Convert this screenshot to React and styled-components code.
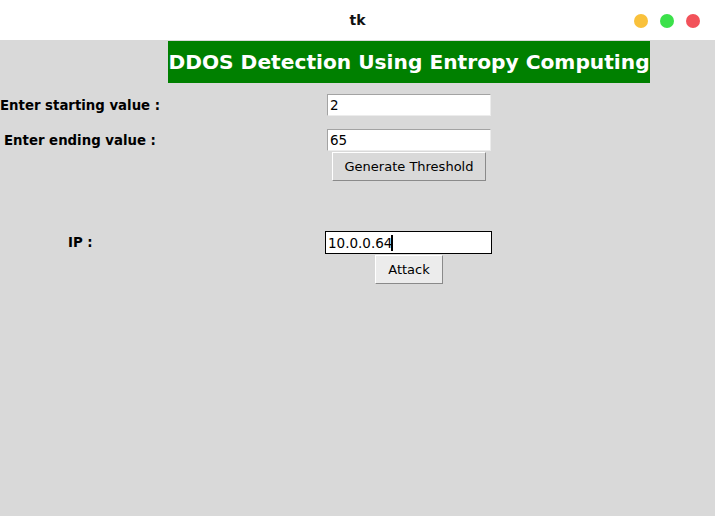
import React, { useState } from 'react';
import styled, { createGlobalStyle } from 'styled-components';

const GlobalStyle = createGlobalStyle`
  html, body {
    margin: 0;
    padding: 0;
    background: #d9d9d9;
    font-family: "DejaVu Sans", sans-serif;
  }
`;

const Window = styled.div`
  width: 715px;
  height: 516px;
  display: flex;
  flex-direction: column;
  background: #d9d9d9;
  overflow: hidden;
`;

const TitleBar = styled.div`
  height: 40px;
  background: #ffffff;
  display: grid;
  grid-template-columns: 1fr auto 1fr;
  align-items: center;
  h1 {
    grid-column: 2;
    margin: 0;
    font-size: 14px;
    font-weight: bold;
    color: #111;
  }
`;

const Dots = styled.div`
  grid-column: 3;
  justify-self: end;
  display: flex;
  gap: 12px;
  padding-right: 15px;
  margin-top: 1px;
`;

const Dot = styled.span`
  width: 14px;
  height: 14px;
  border-radius: 50%;
  background: ${(p) => p.color};
`;

const Banner = styled.div`
  margin: 1px 0 0 168px;
  width: 482px;
  height: 42px;
  background: #008000;
  color: #ffffff;
  font-weight: bold;
  font-size: 20.2px;
  display: flex;
  align-items: center;
  justify-content: center;
  white-space: nowrap;
`;

const Row = styled.div`
  display: grid;
  grid-template-columns: ${(p) => p.$col || 327}px auto;
  align-items: center;
  margin-top: ${(p) => p.$top}px;
`;

const Label = styled.label`
  padding-left: ${(p) => p.$indent || 0}px;
  font-weight: bold;
  font-size: 13.3px;
  color: #000;
  white-space: nowrap;
`;

const Field = styled.div`
  position: relative;
  width: ${(p) => p.$w || 164}px;
`;

const Entry = styled.input`
  box-sizing: border-box;
  width: 100%;
  height: ${(p) => p.$h || 22}px;
  margin: 0;
  padding: 0 2px;
  font-family: "DejaVu Sans", sans-serif;
  font-size: 13.5px;
  color: #000;
  background: #ffffff;
  outline: none;
  border: 1px solid;
  border-color: ${(p) => (p.$focus ? '#000' : '#a3a3a3 #ececec #ececec #a3a3a3')};
  box-shadow: ${(p) => (p.$focus ? 'inset 0 0 0 1px #fff' : 'none')};
  caret-color: transparent;
`;

const Caret = styled.span`
  position: absolute;
  left: ${(p) => p.$x}px;
  top: 4px;
  width: 2px;
  height: 16px;
  background: #000;
  pointer-events: none;
`;

const ButtonRow = styled.div`
  display: flex;
  padding-left: ${(p) => p.$left}px;
  margin-top: ${(p) => p.$top}px;
`;

const Button = styled.button`
  box-sizing: border-box;
  width: ${(p) => p.$w}px;
  height: 29px;
  margin: 0;
  padding: 0;
  font-family: "DejaVu Sans", sans-serif;
  font-size: 13px;
  color: #000;
  background: ${(p) => (p.$active ? '#ececec' : '#d9d9d9')};
  border: 1px solid;
  border-color: #ffffff #8a8a8a #8a8a8a #ffffff;
`;

export default function App() {
  const [start, setStart] = useState('2');
  const [end, setEnd] = useState('65');
  const [ip, setIp] = useState('10.0.0.64');

  return (
    <>
      <GlobalStyle />
      <Window>
        <TitleBar>
          <h1>tk</h1>
          <Dots>
            <Dot color="#f9c13b" />
            <Dot color="#3be14a" />
            <Dot color="#f2525a" />
          </Dots>
        </TitleBar>

        <Banner>DDOS Detection Using Entropy Computing</Banner>

        <Row $top={11}>
          <Label>Enter starting value :</Label>
          <Field>
            <Entry value={start} onChange={(e) => setStart(e.target.value)} />
          </Field>
        </Row>
        <Row $top={13}>
          <Label $indent={4}>Enter ending value :</Label>
          <Field>
            <Entry value={end} onChange={(e) => setEnd(e.target.value)} />
          </Field>
        </Row>
        <ButtonRow $left={332} $top={1}>
          <Button $w={154}>Generate Threshold</Button>
        </ButtonRow>

        <Row $top={50} $col={325}>
          <Label $indent={68}>IP :</Label>
          <Field $w={167}>
            <Entry $h={23} $focus value={ip} onChange={(e) => setIp(e.target.value)} />
            <Caret $x={66} />
          </Field>
        </Row>
        <ButtonRow $left={375} $top={1}>
          <Button $w={68} $active>Attack</Button>
        </ButtonRow>
      </Window>
    </>
  );
}
